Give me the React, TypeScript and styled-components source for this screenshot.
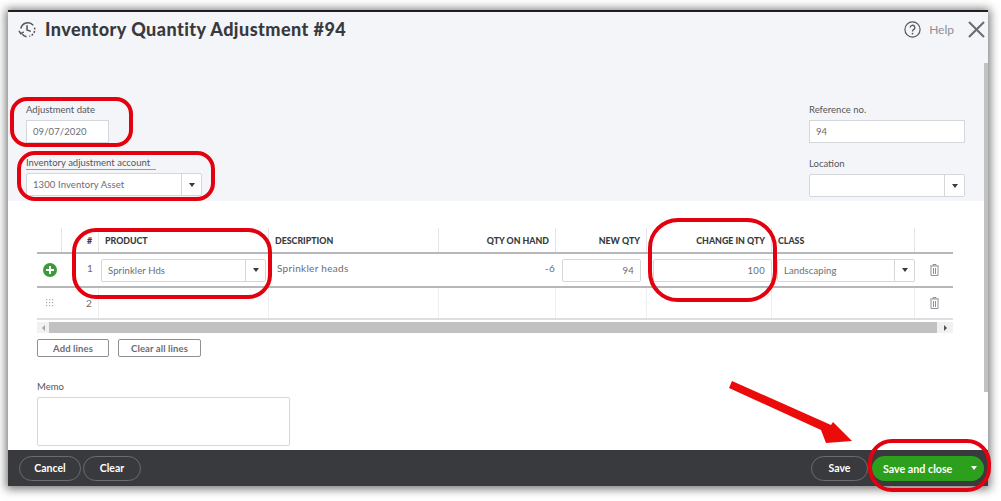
import React from 'react';
import styled, { createGlobalStyle } from 'styled-components';

const GlobalStyle = createGlobalStyle`
    html, body {
        margin: 0;
        padding: 0;
        background: #fff;
    }
    body {
        width: 1001px;
        height: 501px;
        overflow: hidden;
        font-family: "Lato", "Liberation Sans", sans-serif;
        color: #393a3d;
    }
    * {
        box-sizing: border-box;
    }
`;

const Page = styled.div`
    position: relative;
    width: 1001px;
    height: 501px;
    padding: 10px 13px 15px 8px;
    overflow: hidden;
`;

const Dialog = styled.div`
    position: relative;
    width: 980px;
    height: 476px;
    display: flex;
    flex-direction: column;
    border-top: 2px solid #1f2022;
    background: #fff;
    box-shadow: 0 1px 9px 2px rgba(0, 0, 0, 0.55);
`;

const TopPanel = styled.div`
    height: 189px;
    background: #f4f5f8;
    display: flex;
    flex-direction: column;
`;

const TitleBar = styled.div`
    height: 36px;
    padding: 0 3px 2px 10px;
    display: flex;
    align-items: center;
`;

const Title = styled.h1`
    margin: 0 0 0 8px;
    font-size: 18px;
    font-weight: 900;
    letter-spacing: 0.45px;
    color: #393a3d;
`;

const HelpGroup = styled.div`
    margin-left: auto;
    display: flex;
    align-items: center;
    gap: 8px;
    color: #8d9096;
    font-size: 12px;
`;

const CloseButton = styled.span`
    margin-left: 14px;
    display: flex;
`;

const FieldColumns = styled.div`
    flex: 1;
    padding: 56px 23px 0 18px;
    display: flex;
    justify-content: space-between;
`;

const FieldStack = styled.div`
    display: flex;
    flex-direction: column;
`;

const FieldLabel = styled.label<{ $underline?: boolean }>`
    display: block;
    width: fit-content;
    height: 13px;
    padding-right: ${(p) => (p.$underline ? '6px' : '0')};
    font-size: 9.5px;
    line-height: 12px;
    color: #54565b;
    border-bottom: ${(p) => (p.$underline ? '1px solid #9a9ca2' : 'none')};
`;

const FieldBlock = styled.div<{ $top?: number }>`
    margin-top: ${(p) => p.$top ?? 0}px;
    display: flex;
    flex-direction: column;
    gap: 3px;
`;

const TextBox = styled.div<{ $w: number }>`
    width: ${(p) => p.$w}px;
    height: 23px;
    padding: 0 6px;
    display: flex;
    align-items: center;
    background: #fff;
    border: 1px solid #d4d7dc;
    font-size: 9.5px;
    letter-spacing: 0.1px;
    color: #6b6c72;
`;

const SelectBox = styled.div<{ $w: number; $h?: number }>`
    width: ${(p) => p.$w}px;
    height: ${(p) => p.$h ?? 23}px;
    display: flex;
    background: #fff;
    border: 1px solid #d4d7dc;
    border-radius: 2px;
    font-size: 9.5px;
    letter-spacing: 0.1px;
    color: #6b6c72;
`;

const SelectValue = styled.span`
    flex: 1;
    padding-left: 6px;
    display: flex;
    align-items: center;
`;

const SelectArrow = styled.span`
    width: 20px;
    display: flex;
    align-items: center;
    justify-content: center;
    border-left: 1px solid #d4d7dc;

    &::after {
        content: '';
        border-left: 3px solid transparent;
        border-right: 3px solid transparent;
        border-top: 4px solid #393a3d;
    }
`;

const BodyPanel = styled.div`
    flex: 1;
    padding: 27px 35px 0 29px;
    display: flex;
    flex-direction: column;
`;

const COLUMNS = '25px 37px 170px 170px 117px 91px 125px 143px 38px';

const HeaderRow = styled.div`
    height: 24px;
    display: grid;
    grid-template-columns: ${COLUMNS};
`;

const HeadCell = styled.div<{ $right?: boolean; $plain?: boolean }>`
    padding: 0 6px;
    display: flex;
    align-items: center;
    justify-content: ${(p) => (p.$right ? 'flex-end' : 'flex-start')};
    border-right: ${(p) => (p.$plain ? 'none' : '1px solid #e3e5e8')};
    font-size: 8.8px;
    font-weight: 900;
    color: #393a3d;
`;

const LineRow = styled.div<{ $h: number; $heavy?: boolean }>`
    height: ${(p) => p.$h}px;
    display: grid;
    grid-template-columns: ${COLUMNS};
    border-top: 2px solid #b5b7ba;
    border-bottom: ${(p) => (p.$heavy ? 'none' : '2px solid #dcdee1')};
`;

const Cell = styled.div<{ $right?: boolean; $center?: boolean; $plain?: boolean; $pad?: string }>`
    padding: ${(p) => p.$pad ?? '0 5px'};
    display: flex;
    align-items: center;
    justify-content: ${(p) => (p.$right ? 'flex-end' : p.$center ? 'center' : 'flex-start')};
    border-right: ${(p) => (p.$plain ? 'none' : '1px solid #eceef0')};
    font-size: 10px;
    letter-spacing: 0.3px;
    color: #6b6c72;
`;

const RowInput = styled.div`
    width: 100%;
    height: 23px;
    padding: 0 6px;
    display: flex;
    align-items: center;
    justify-content: flex-end;
    background: #fff;
    border: 1px solid #d4d7dc;
    border-radius: 2px;
    font-size: 9.5px;
    letter-spacing: 0.3px;
    color: #6b6c72;
`;

const AddDot = styled.span`
    width: 14px;
    height: 14px;
    border-radius: 50%;
    background: #3d9a3a;
    position: relative;

    &::before,
    &::after {
        content: '';
        position: absolute;
        background: #fff;
        left: 3px;
        top: 6px;
        width: 8px;
        height: 2px;
    }

    &::after {
        left: 6px;
        top: 3px;
        width: 2px;
        height: 8px;
    }
`;

const ScrollTrack = styled.div`
    height: 11px;
    margin-top: 2px;
    display: flex;
    align-items: center;
    background: #f1f1f1;
    font-size: 0;
`;

const ScrollThumb = styled.div`
    flex: 1;
    height: 100%;
    background: #c1c1c1;
`;

const ScrollEnd = styled.span<{ $right?: boolean }>`
    width: ${(p) => (p.$right ? '16px' : '12px')};
    height: 100%;
    display: flex;
    align-items: center;
    justify-content: center;

    &::after {
        content: '';
        border-top: 3px solid transparent;
        border-bottom: 3px solid transparent;
        ${(p) => (p.$right ? 'border-left: 3px solid #505050;' : 'border-right: 3px solid #a3a3a3;')}
    }
`;

const TableActions = styled.div`
    margin-top: 6px;
    display: flex;
    gap: 9px;
`;

const OutlineButton = styled.button<{ $w: number }>`
    width: ${(p) => p.$w}px;
    height: 18px;
    padding: 0;
    background: #fff;
    border: 1px solid #8d9096;
    border-radius: 2px;
    font-family: inherit;
    font-size: 9.5px;
    font-weight: 700;
    letter-spacing: 0.1px;
    color: #6b6c72;
`;

const MemoBlock = styled.div`
    margin-top: 24px;
    display: flex;
    flex-direction: column;
    gap: 3px;
`;

const MemoBox = styled.div`
    width: 253px;
    height: 49px;
    border: 1px solid #d4d7dc;
    border-radius: 2px;
    background: #fff;
`;

const Footer = styled.div`
    height: 36px;
    padding: 0 4px 0 11px;
    display: flex;
    align-items: center;
    background: #393a3d;
`;

const FooterGroup = styled.div`
    display: flex;
    align-items: center;
    gap: 2px;
`;

const GhostButton = styled.button<{ $w: number }>`
    width: ${(p) => p.$w}px;
    height: 25px;
    padding: 0;
    background: transparent;
    border: 1px solid #6b6c72;
    border-radius: 13px;
    font-family: inherit;
    font-size: 10.5px;
    font-weight: 700;
    color: #fff;
`;

const SaveGroup = styled(FooterGroup)`
    margin-left: auto;
    gap: 4px;
`;

const PrimaryButton = styled.button`
    width: 112px;
    height: 25px;
    padding: 0 7px 0 11px;
    display: flex;
    align-items: center;
    justify-content: space-between;
    background: #2ca01c;
    border: none;
    border-radius: 13px;
    font-family: inherit;
    font-size: 10.7px;
    font-weight: 700;
    color: #fff;

    &::after {
        content: '';
        border-left: 3.5px solid transparent;
        border-right: 3.5px solid transparent;
        border-top: 4px solid #fff;
    }
`;

const DialogScrollbar = styled.div`
    position: absolute;
    right: 0;
    top: 51px;
    width: 4px;
    height: 329px;
    background: #c1c1c1;
`;

// red marks someone drew over the screenshot
const Mark = styled.div<{ $x: number; $y: number; $w: number; $h: number; $r: number }>`
    position: absolute;
    left: ${(p) => p.$x}px;
    top: ${(p) => p.$y}px;
    width: ${(p) => p.$w}px;
    height: ${(p) => p.$h}px;
    border: 4.5px solid #e3000f;
    border-radius: ${(p) => p.$r}px;
    pointer-events: none;
`;

const ArrowMark = styled.svg`
    position: absolute;
    left: 720px;
    top: 380px;
`;

const HistoryIcon = () => (
    <svg width="19" height="19" viewBox="0 0 20 20" fill="none" stroke="#54565b" strokeWidth="1.6">
        <path d="M3 9 A7.5 7.5 0 0 1 16 5.5" />
        <path d="M17.4 8 A7.5 7.5 0 0 1 12 17.2" strokeDasharray="2 1.6" />
        <path d="M9 17.6 A7.5 7.5 0 0 1 4.5 15" />
        <path d="M1 11.5 L3 14.5 L6 12.5" />
        <path d="M9.5 5.5 V10.5 L13.5 12" />
    </svg>
);

const HelpIcon = () => (
    <svg width="17" height="17" viewBox="0 0 17 17" fill="none">
        <circle cx="8.5" cy="8.5" r="7.6" stroke="#54565b" strokeWidth="1.2" />
        <path d="M6.2 6.6 a2.3 2.3 0 1 1 3.4 2 c-.8.5-1.1.9-1.1 1.8" stroke="#54565b" strokeWidth="1.3" />
        <circle cx="8.5" cy="12.6" r="0.9" fill="#54565b" />
    </svg>
);

const CloseIcon = () => (
    <svg width="17" height="17" viewBox="0 0 17 17" fill="none" stroke="#6b6c72" strokeWidth="2.1">
        <path d="M1 1 L16 16 M16 1 L1 16" />
    </svg>
);

const TrashIcon = () => (
    <svg width="9" height="12" viewBox="0 0 9 12" fill="none" stroke="#8d9096" strokeWidth="1">
        <path d="M0 2 H9 M3 2 V.5 H6 V2" />
        <path d="M1 2.5 V11.5 H8 V2.5 M3.5 4 V10 M5.5 4 V10" />
    </svg>
);

const GripIcon = () => (
    <svg width="8" height="8" viewBox="0 0 8 8" fill="#a9abb0">
        {[0, 3, 6].map((y) =>
            [0, 3, 6].map((x) => <rect key={`${x}-${y}`} x={x} y={y} width="1.2" height="1.2" />)
        )}
    </svg>
);

const App = () => {
    return (
        <Page>
            <GlobalStyle />
            <Dialog>
                <TopPanel>
                    <TitleBar>
                        <HistoryIcon />
                        <Title>Inventory Quantity Adjustment #94</Title>
                        <HelpGroup>
                            <HelpIcon />
                            Help
                        </HelpGroup>
                        <CloseButton>
                            <CloseIcon />
                        </CloseButton>
                    </TitleBar>
                    <FieldColumns>
                        <FieldStack>
                            <FieldBlock>
                                <FieldLabel>Adjustment date</FieldLabel>
                                <TextBox $w={83}>09/07/2020</TextBox>
                            </FieldBlock>
                            <FieldBlock $top={14}>
                                <FieldLabel $underline>Inventory adjustment account</FieldLabel>
                                <SelectBox $w={176}>
                                    <SelectValue>1300 Inventory Asset</SelectValue>
                                    <SelectArrow />
                                </SelectBox>
                            </FieldBlock>
                        </FieldStack>
                        <FieldStack>
                            <FieldBlock>
                                <FieldLabel>Reference no.</FieldLabel>
                                <TextBox $w={156}>94</TextBox>
                            </FieldBlock>
                            <FieldBlock $top={15}>
                                <FieldLabel>Location</FieldLabel>
                                <SelectBox $w={156}>
                                    <SelectValue />
                                    <SelectArrow />
                                </SelectBox>
                            </FieldBlock>
                        </FieldStack>
                    </FieldColumns>
                </TopPanel>
                <BodyPanel>
                    <HeaderRow>
                        <HeadCell />
                        <HeadCell $right>#</HeadCell>
                        <HeadCell>PRODUCT</HeadCell>
                        <HeadCell>DESCRIPTION</HeadCell>
                        <HeadCell $right>QTY ON HAND</HeadCell>
                        <HeadCell $right>NEW QTY</HeadCell>
                        <HeadCell $right>CHANGE IN QTY</HeadCell>
                        <HeadCell>CLASS</HeadCell>
                        <HeadCell $plain />
                    </HeaderRow>
                    <LineRow $h={34} $heavy>
                        <Cell $center $plain>
                            <AddDot />
                        </Cell>
                        <Cell $right $plain $pad="0 6px 4px 0">1</Cell>
                        <Cell $pad="0 2px">
                            <SelectBox $w={165}>
                                <SelectValue>Sprinkler Hds</SelectValue>
                                <SelectArrow />
                            </SelectBox>
                        </Cell>
                        <Cell $plain $pad="0 5px 4px 8px">Sprinkler heads</Cell>
                        <Cell $right $plain $pad="0 1px 4px 0">-6</Cell>
                        <Cell $plain $pad="0 6px">
                            <RowInput>94</RowInput>
                        </Cell>
                        <Cell $plain $pad="0 0 0 6px">
                            <RowInput>100</RowInput>
                        </Cell>
                        <Cell $plain $pad="0 0 0 5px">
                            <SelectBox $w={138}>
                                <SelectValue>Landscaping</SelectValue>
                                <SelectArrow />
                            </SelectBox>
                        </Cell>
                        <Cell $center $plain>
                            <TrashIcon />
                        </Cell>
                    </LineRow>
                    <LineRow $h={34}>
                        <Cell $center $plain>
                            <GripIcon />
                        </Cell>
                        <Cell $right $pad="0 6px 0 0">2</Cell>
                        <Cell />
                        <Cell />
                        <Cell />
                        <Cell />
                        <Cell />
                        <Cell />
                        <Cell $center $plain>
                            <TrashIcon />
                        </Cell>
                    </LineRow>
                    <ScrollTrack>
                        <ScrollEnd />
                        <ScrollThumb />
                        <ScrollEnd $right />
                    </ScrollTrack>
                    <TableActions>
                        <OutlineButton $w={72}>Add lines</OutlineButton>
                        <OutlineButton $w={83}>Clear all lines</OutlineButton>
                    </TableActions>
                    <MemoBlock>
                        <FieldLabel>Memo</FieldLabel>
                        <MemoBox />
                    </MemoBlock>
                </BodyPanel>
                <Footer>
                    <FooterGroup>
                        <GhostButton $w={62}>Cancel</GhostButton>
                        <GhostButton $w={58}>Clear</GhostButton>
                    </FooterGroup>
                    <SaveGroup>
                        <GhostButton $w={57}>Save</GhostButton>
                        <PrimaryButton>Save and close</PrimaryButton>
                    </SaveGroup>
                </Footer>
                <DialogScrollbar />
            </Dialog>
            <Mark $x={10} $y={97} $w={123} $h={50} $r={17} />
            <Mark $x={17} $y={151} $w={198} $h={50} $r={18} />
            <Mark $x={72} $y={228} $w={200} $h={71} $r={24} />
            <Mark $x={648} $y={218} $w={129} $h={84} $r={30} />
            <Mark $x={868} $y={439} $w={123} $h={53} $r={24} />
            <ArrowMark width="140" height="70" viewBox="720 380 140 70">
                <path d="M729 388 L821 430 L826 443 L852 441 L833 422 L831 425 L732 381 Z" fill="#ec0b0b" />
            </ArrowMark>
        </Page>
    );
};

export default App;
